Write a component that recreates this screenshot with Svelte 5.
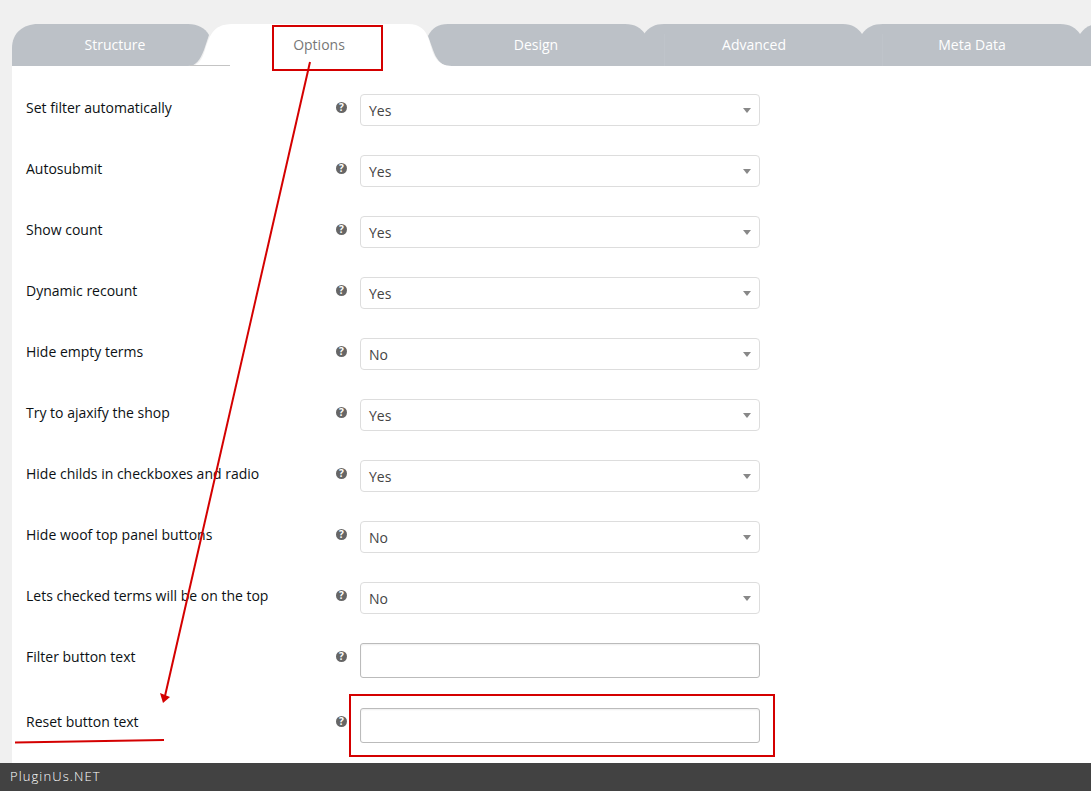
<script>
  const tabs = [
    { name: 'Structure', cls: 'first' },
    { name: 'Options', cls: 'active' },
    { name: 'Design', cls: '' },
    { name: 'Advanced', cls: '' },
    { name: 'Meta Data', cls: '' }
  ];

  const rows = [
    { label: 'Set filter automatically', value: 'Yes' },
    { label: 'Autosubmit', value: 'Yes' },
    { label: 'Show count', value: 'Yes' },
    { label: 'Dynamic recount', value: 'Yes' },
    { label: 'Hide empty terms', value: 'No' },
    { label: 'Try to ajaxify the shop', value: 'Yes' },
    { label: 'Hide childs in checkboxes and radio', value: 'Yes' },
    { label: 'Hide woof top panel buttons', value: 'No' },
    { label: 'Lets checked terms will be on the top', value: 'No' },
    { label: 'Filter button text', input: true },
    { label: 'Reset button text', input: true }
  ];
</script>

<div class="page">
  <main class="content">
    <div class="tabs">
      <svg class="tab-shapes" width="1079" height="42" viewBox="12 24 1079 42" aria-hidden="true">
        <g fill="#bcc1c7">
          <path d="M12 66V48C12 33 23 24 38 24H188C198 24 205 28 209 35L204 50C200 60 196 66 188 66Z" />
          <path d="M428 36C432 28 438 24 448 24H625C635 24 641 28 645 34V66H450C440 66 436 58 433 50Z" />
          <path d="M644 34C649 27 655 24 664 24H843C852 24 858 28 862 34V66H644Z" />
          <path d="M862 34C867 27 873 24 883 24H1060C1070 24 1076 28 1080 34V66H862Z" />
          <path d="M1080 34C1085 27 1091 24 1100 24V66H1080Z" />
        </g>
        <path d="M664.5 34V66M882.5 34V66" stroke="#bfc4ca" fill="none" />
        <path d="M190 66C198 66 202 60 205 50C209 38 212 24 232 24H408C420 24 426 30 429 40C433 54 436 66 452 66Z" fill="#fff" />
        <path d="M190 65.5H230" stroke="#c4c4c4" fill="none" />
      </svg>
      {#each tabs as tab}
        <div class="tab {tab.cls}">{tab.name}</div>
      {/each}
    </div>

    <div class="panel">
      {#each rows as row}
        <div class="row" class:tall={row.input}>
          <span class="label">{row.label}</span>
          <span class="help">?</span>
          {#if row.input}
            <input class="text" type="text" />
          {:else}
            <div class="select">
              <span>{row.value}</span>
              <i class="caret"></i>
            </div>
          {/if}
        </div>
      {/each}
    </div>
  </main>

  <footer class="footer">PluginUs.NET</footer>

  <!-- hand drawn annotations on top of the screenshot -->
  <svg class="notes" width="1091" height="791" viewBox="0 0 1091 791" aria-hidden="true">
    <g fill="none" stroke="#d40000">
      <rect x="273" y="26" width="109" height="44" stroke-width="2" />
      <rect x="350" y="695" width="424" height="61" stroke-width="2" />
      <path d="M310 62L165 696" stroke-width="2" />
      <path d="M15 742.5L164 740" stroke-width="2" />
    </g>
    <path d="M160 693L170 697L163 703Z" fill="#d40000" />
  </svg>
</div>

<style>
  :global(body) {
    margin: 0;
    background: #f0f0f0;
    font-family: "Open Sans", sans-serif;
  }

  .page {
    position: relative;
    display: flex;
    flex-direction: column;
    height: 791px;
    overflow: hidden;
  }

  .content {
    flex: 1;
    margin-left: 12px;
    padding-top: 24px;
  }

  .tabs {
    position: relative;
    display: flex;
    height: 42px;
    overflow: hidden;
  }

  .tab-shapes {
    position: absolute;
    left: 0;
    top: 0;
  }

  .tab {
    position: relative;
    flex: 0 0 218px;
    box-sizing: border-box;
    line-height: 42px;
    text-align: center;
    font-size: 14px;
    color: #fff;
  }

  .tab.first {
    flex-basis: 197px;
    padding-left: 9px;
  }

  .tab.active {
    padding-left: 2px;
    color: #777;
  }

  .panel {
    display: flex;
    flex-direction: column;
    gap: 29px;
    height: 697px;
    box-sizing: border-box;
    padding: 28px 0 0 14px;
    background: #fff;
  }

  .row {
    display: flex;
    align-items: center;
  }

  .label {
    width: 310px;
    margin-bottom: 5px;
    font-size: 14px;
    font-weight: 500;
    color: #0c1114;
  }

  .row.tall .label {
    margin-bottom: 9px;
  }

  .help {
    width: 11px;
    height: 11px;
    margin: 0 13px 6px 0;
    border-radius: 50%;
    background: #666;
    color: #fff;
    font: 700 10px/11px "Open Sans", sans-serif;
    text-align: center;
  }

  .row.tall .help {
    margin-bottom: 8px;
  }

  .select {
    display: flex;
    justify-content: space-between;
    align-items: center;
    width: 400px;
    height: 32px;
    box-sizing: border-box;
    padding: 0 8px;
    border: 1px solid #ddd;
    border-radius: 4px;
    background: #fff;
    font-size: 14px;
    color: #444;
  }

  .caret {
    width: 0;
    height: 0;
    border: 4px solid transparent;
    border-top: 5px solid #888;
    border-bottom: 0;
  }

  .text {
    width: 400px;
    height: 35px;
    box-sizing: border-box;
    padding: 0 8px;
    border: 1px solid #bbb;
    border-radius: 3px;
    box-shadow: inset 0 1px 2px rgba(0, 0, 0, 0.07);
    background: #fff;
  }

  .row.tall + .row.tall {
    margin-top: 1px;
  }

  .footer {
    flex: 0 0 28px;
    padding-left: 10px;
    background: #424242;
    color: #fff;
    font-size: 13px;
    font-weight: 300;
    letter-spacing: 1.1px;
    line-height: 26px;
  }

  .notes {
    position: absolute;
    left: 0;
    top: 0;
    pointer-events: none;
  }
</style>
